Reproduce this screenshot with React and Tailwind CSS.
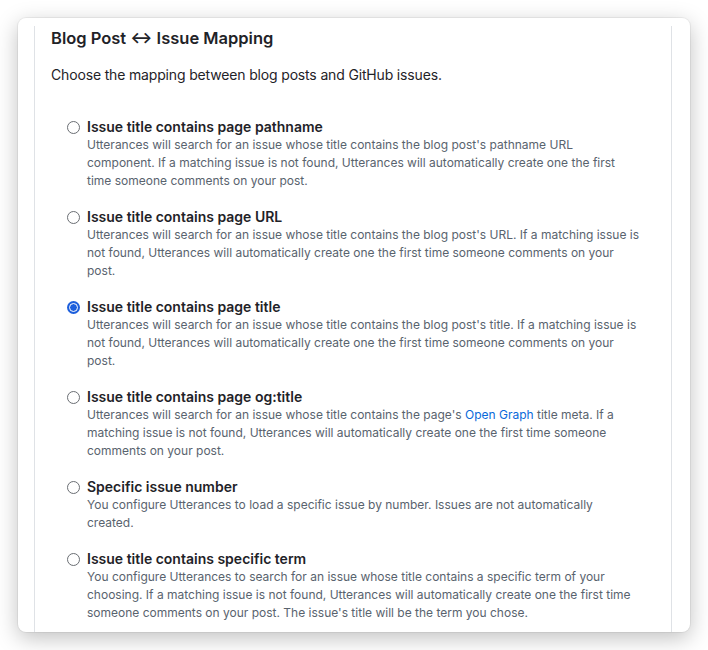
import React from 'react';

const options = [
  {
    title: 'Issue title contains page pathname',
    desc: "Utterances will search for an issue whose title contains the blog post's pathname URL component. If a matching issue is not found, Utterances will automatically create one the first time someone comments on your post.",
  },
  {
    title: 'Issue title contains page URL',
    desc: "Utterances will search for an issue whose title contains the blog post's URL. If a matching issue is not found, Utterances will automatically create one the first time someone comments on your post.",
  },
  {
    title: 'Issue title contains page title',
    desc: "Utterances will search for an issue whose title contains the blog post's title. If a matching issue is not found, Utterances will automatically create one the first time someone comments on your post.",
    checked: true,
  },
  {
    title: 'Issue title contains page og:title',
    desc: (
      <>
        Utterances will search for an issue whose title contains the page's{' '}
        <a href="#" className="text-[#0969da]">Open Graph</a> title meta. If a matching issue is not found,
        Utterances will automatically create one the first time someone comments on your post.
      </>
    ),
  },
  {
    title: 'Specific issue number',
    desc: 'You configure Utterances to load a specific issue by number. Issues are not automatically created.',
  },
  {
    title: 'Issue title contains specific term',
    desc: "You configure Utterances to search for an issue whose title contains a specific term of your choosing. If a matching issue is not found, Utterances will automatically create one the first time someone comments on your post. The issue's title will be the term you chose.",
  },
];

const Radio = ({ checked }) =>
  checked ? (
    <span className="mt-[3px] w-[13px] h-[13px] shrink-0 rounded-full bg-[#1d5fdc] flex items-center justify-center">
      <span className="w-[9px] h-[9px] rounded-full border-[1.5px] border-white bg-[#1d5fdc]" />
    </span>
  ) : (
    <span className="mt-[3px] w-[13px] h-[13px] shrink-0 rounded-full border border-[#6a6e73] bg-white" />
  );

export default function App() {
  return (
    <div className="min-h-[650px] bg-white pt-[18px] pl-[18px]" style={{ fontFamily: 'Inter, "Noto Sans", sans-serif' }}>
      <div className="w-[672px] h-[614px] rounded-lg bg-white overflow-hidden shadow-[0_6px_22px_rgba(0,0,0,0.25)] ring-1 ring-black/5">
        <div className="ml-4 w-[638px] h-full border-x border-[#dfe2e6] pl-4 pr-4">
          <h2 className="mt-2 text-[16.5px] leading-6 font-semibold text-[#1f2328]">Blog Post ↔ Issue Mapping</h2>
          <p className="mt-[15px] text-[14px] leading-5 tracking-[-0.16px] text-[#1f2328]">
            Choose the mapping between blog posts and GitHub issues.
          </p>
          <ul className="mt-[33px] pl-4 flex flex-col gap-[18px]">
            {options.map((o) => (
              <li key={o.title} className="flex gap-[7px]">
                <Radio checked={o.checked} />
                <div className="w-[553px]">
                  <div className="text-[14px] leading-[18px] font-semibold text-[#1f2328]">{o.title}</div>
                  <p className="text-[12px] leading-[18px] text-[#59636e]">{o.desc}</p>
                </div>
              </li>
            ))}
          </ul>
        </div>
      </div>
    </div>
  );
}
